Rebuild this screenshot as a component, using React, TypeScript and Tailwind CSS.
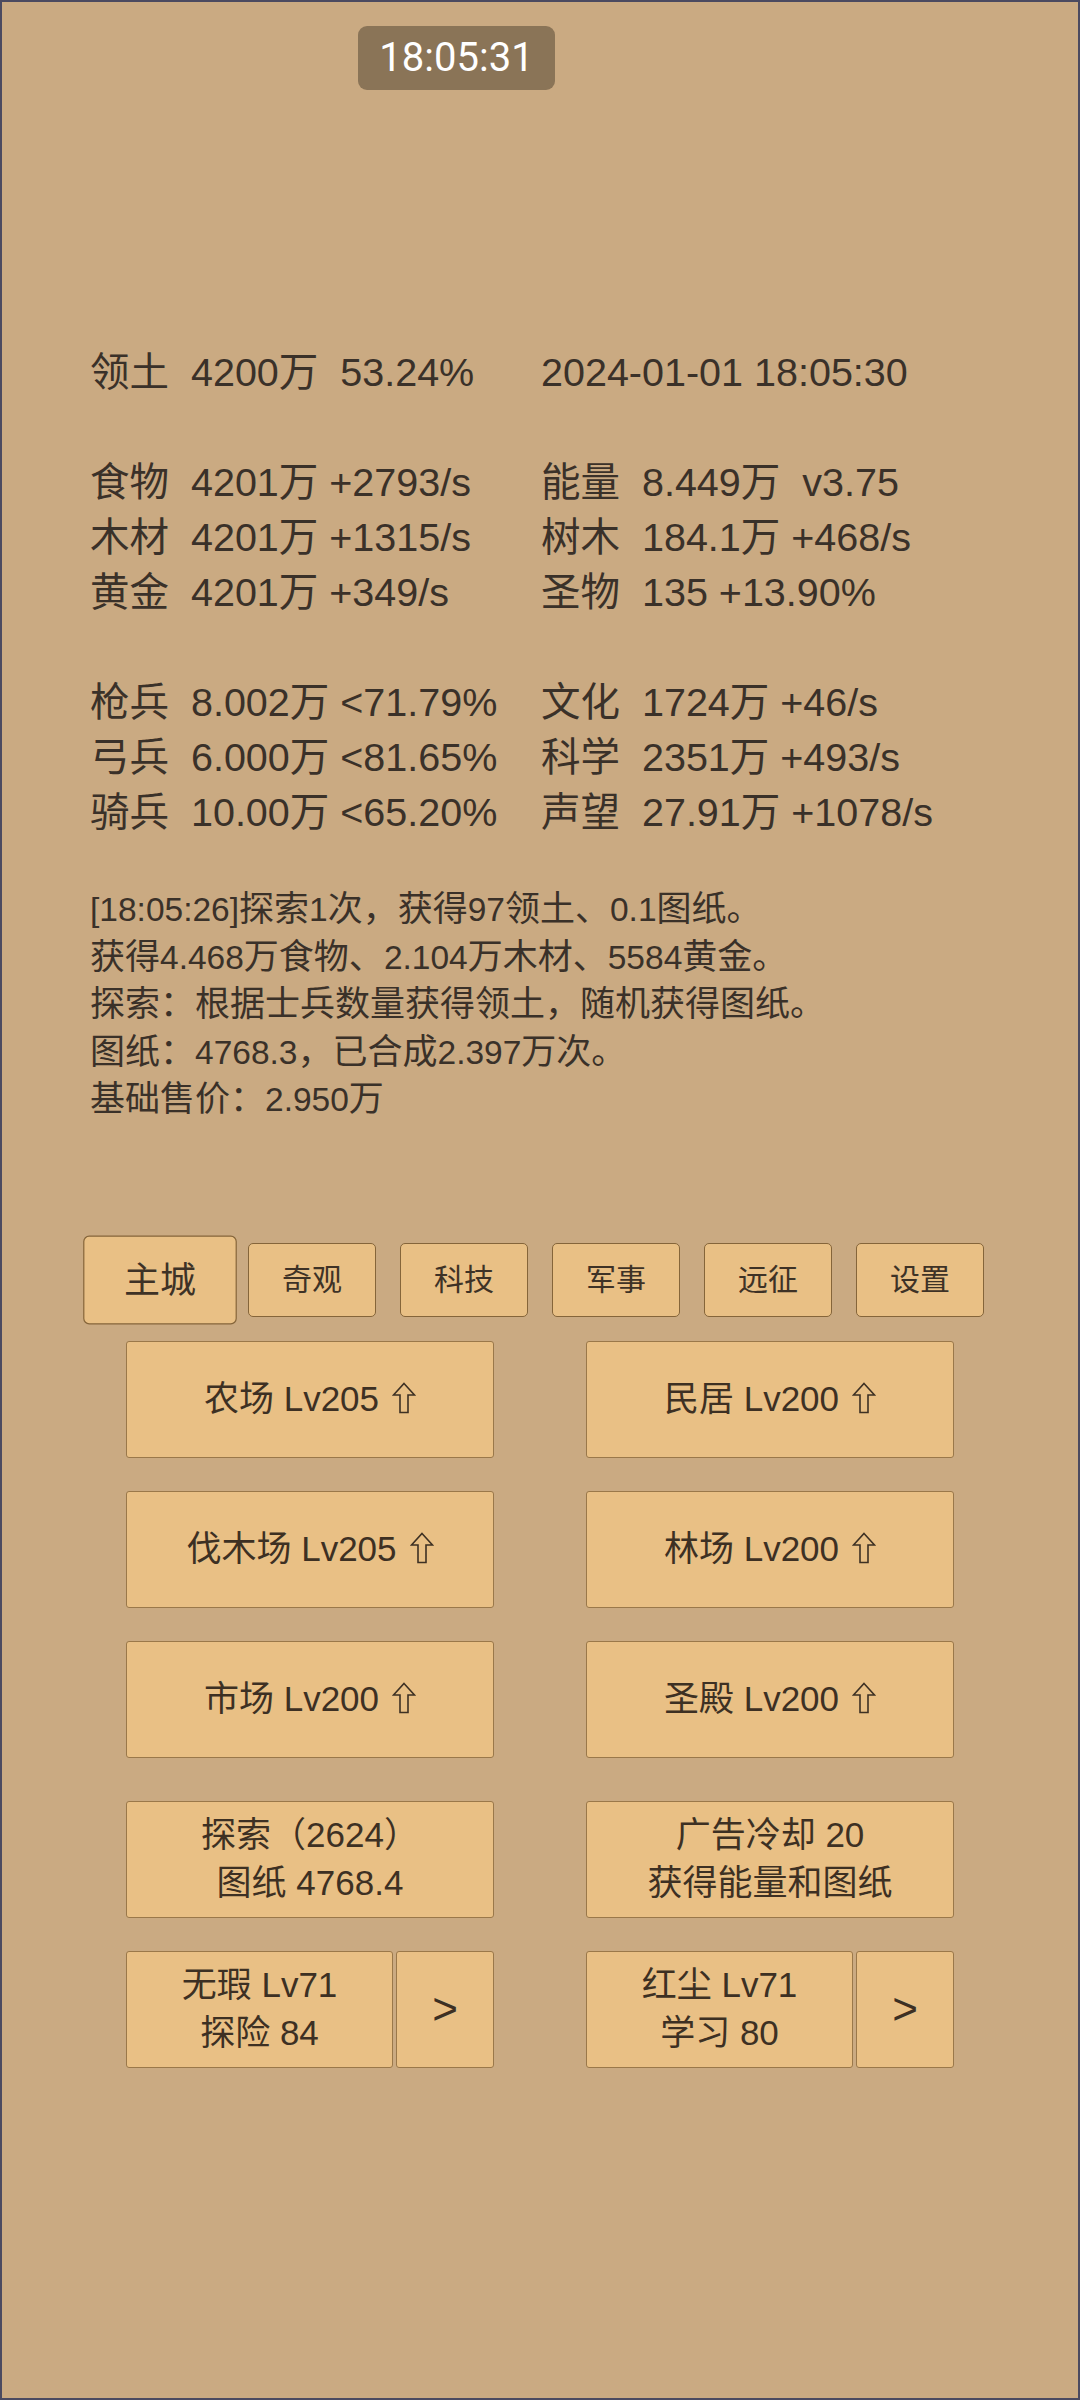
import React from 'react';

const stats: [string, string][] = [
  ['领土  4200万  53.24%', '2024-01-01 18:05:30'],
  ['', ''],
  ['食物  4201万 +2793/s', '能量  8.449万  v3.75'],
  ['木材  4201万 +1315/s', '树木  184.1万 +468/s'],
  ['黄金  4201万 +349/s', '圣物  135 +13.90%'],
  ['', ''],
  ['枪兵  8.002万 <71.79%', '文化  1724万 +46/s'],
  ['弓兵  6.000万 <81.65%', '科学  2351万 +493/s'],
  ['骑兵  10.00万 <65.20%', '声望  27.91万 +1078/s'],
];

const logLines = [
  '[18:05:26]探索1次，获得97领土、0.1图纸。',
  '获得4.468万食物、2.104万木材、5584黄金。',
  '探索：根据士兵数量获得领土，随机获得图纸。',
  '图纸：4768.3，已合成2.397万次。',
  '基础售价：2.950万',
];

const tabs = ['主城', '奇观', '科技', '军事', '远征', '设置'];

const buildings = [
  '农场 Lv205',
  '民居 Lv200',
  '伐木场 Lv205',
  '林场 Lv200',
  '市场 Lv200',
  '圣殿 Lv200',
];

// the log's hanzi sit a touch larger than its latin digits
function Mixed({ text }: { text: string }) {
  const parts = text.split(/([\u3000-\u303f\u4e00-\u9fff\uff00-\uffef]+)/);
  return (
    <>
      {parts.map((p, i) =>
        i % 2 ? (
          <span key={i} className="text-[35px]">
            {p}
          </span>
        ) : (
          p
        )
      )}
    </>
  );
}

function UpArrow() {
  return (
    <svg width="24" height="32" viewBox="0 0 24 32" className="inline-block ml-[13px] align-[-3px]">
      <path
        d="M12 1.5 L22.5 13 L16 13 L16 30.5 L8 30.5 L8 13 L1.5 13 Z"
        fill="none"
        stroke="#3d3023"
        strokeWidth="1.6"
      />
    </svg>
  );
}

const btn =
  'bg-[#e9c085] border border-[#9a784a] rounded-[3px] text-[#3d3023] flex items-center justify-center text-center';

export default function App() {
  return (
    <div className="relative w-full h-[2400px] border-2 border-[#4b4a60] bg-[#caaa82] text-[#3a3129] [font-family:'Liberation_Sans','Noto_Sans_CJK_SC',sans-serif]">
      {/* clock toast */}
      <div className="absolute top-[24px] left-[356px] w-[197px] h-[64px] rounded-[9px] bg-[#8a7457] flex items-center justify-center text-white text-[40px] [font-family:Roboto,sans-serif]">
        18:05:31
      </div>

      {/* stats */}
      <div className="pt-[343px] pl-[88px] text-[39.5px] leading-[55px] whitespace-pre">
        {stats.map((row, i) => (
          <div key={i} className="grid grid-cols-[451px_1fr] h-[55px]">
            <span>{row[0]}</span>
            <span>{row[1]}</span>
          </div>
        ))}
      </div>

      {/* log */}
      <div className="mt-[45px] pl-[88px] text-[33.5px] leading-[47.5px]">
        {logLines.map((l, i) => (
          <div key={i} className="h-[47.5px] overflow-visible whitespace-nowrap">
            <Mixed text={l} />
          </div>
        ))}
      </div>

      {/* tabs */}
      <div className="mt-[120px] flex justify-center gap-[24px]">
        {tabs.map((t, i) => (
          <div
            key={t}
            className={
              'w-[128px] h-[74px] flex items-center justify-center text-[30px] bg-[#e9c085] border border-[#85653a] rounded-[5px] text-[#3e3226] ' +
              (i === 0 ? 'scale-[1.2] border-[#7a5a30]' : '')
            }
          >
            {t}
          </div>
        ))}
      </div>

      {/* buildings */}
      <div className="mt-[24px] grid grid-cols-[368px_368px] justify-center gap-x-[92px] gap-y-[33px] text-[35px]">
        {buildings.map((b) => (
          <div key={b} className={btn + ' h-[117px]'}>
            <span>
              {b}
              <UpArrow />
            </span>
          </div>
        ))}
      </div>

      {/* actions */}
      <div className="mt-[43px] grid grid-cols-[368px_368px] justify-center gap-x-[92px] gap-y-[33px] text-[35px] leading-[48px]">
        <div className={btn + ' h-[117px] flex-col'}>
          <div>探索（2624）</div>
          <div>图纸 4768.4</div>
        </div>
        <div className={btn + ' h-[117px] flex-col'}>
          <div>广告冷却 20</div>
          <div>获得能量和图纸</div>
        </div>
        <div className="flex gap-[3px] h-[117px]">
          <div className={btn + ' flex-1 flex-col'}>
            <div>无瑕 Lv71</div>
            <div>探险 84</div>
          </div>
          <div className={btn + ' w-[98px] text-[44px]'}>&gt;</div>
        </div>
        <div className="flex gap-[3px] h-[117px]">
          <div className={btn + ' flex-1 flex-col'}>
            <div>红尘 Lv71</div>
            <div>学习 80</div>
          </div>
          <div className={btn + ' w-[98px] text-[44px]'}>&gt;</div>
        </div>
      </div>
    </div>
  );
}
